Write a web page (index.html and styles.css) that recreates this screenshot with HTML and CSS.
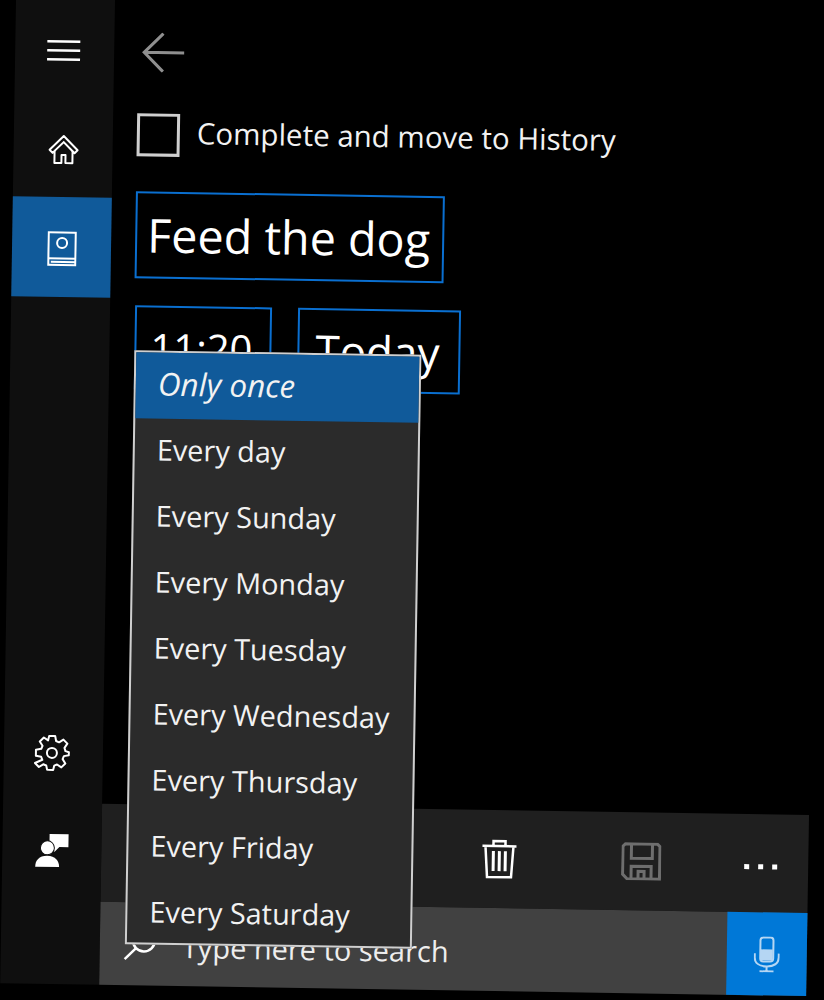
FILE: index.html
```html
<!DOCTYPE html>
<html lang="en">
<head>
<meta charset="utf-8">
<title>Reminder</title>
<link rel="stylesheet" href="styles.css">
</head>
<body>
<div class="app">
  <nav class="sidebar">
    <div class="nav-item nav-menu">
      <svg width="36" height="24" viewBox="0 0 36 24"><path d="M2 3.500H35M2 12.500H35M2 21.500H35" stroke="#fff" stroke-width="2.500" fill="none"/></svg>
    </div>
    <div class="nav-item">
      <svg width="32" height="32" viewBox="0 0 32 32" fill="none" stroke="#fff" stroke-width="2"><path d="M16 2 2 16l3 3 2-2v12h7v-8h4v8h7V17l2 2 3-3z" stroke-linejoin="round"/><path d="M7 17 16 8l9 9"/></svg>
    </div>
    <div class="nav-item nav-active">
      <svg width="30" height="36" viewBox="0 0 30 36" fill="none" stroke="#fff" stroke-width="2"><path d="M1.500 1.500H28.500V34H1.500Z"/><path d="M1.500 27.500H28.500M4 31H28.500"/><circle cx="15" cy="12" r="5"/></svg>
    </div>
    <div class="nav-spacer"></div>
    <div class="nav-item nav-gear">
      <svg width="36" height="36" viewBox="0 0 36 36" fill="none" stroke="#fff" stroke-width="2"><path d="M15 2h6l1 5 3 1.300 4.300-2.800 4 4-2.800 4.300L31.500 17l3.500 1v3l-5 1-1.200 3 2.800 4.300-4 4-4.300-2.800-2.800 1.200-1 4.300h-6l-1-4.300-3-1.200-4.300 2.800-4-4L8.500 26 7.300 23 2 22v-6l5.300-1 1.200-3L5.700 7.700l4-4L14 6.500z" transform="translate(0 -1)" stroke-linejoin="round"/><circle cx="18" cy="18" r="5"/></svg>
    </div>
    <div class="nav-item nav-person">
      <svg width="34" height="36" viewBox="0 0 34 36" fill="#fff"><path d="M14 1h19v13H24l-5 5-1-7-4-3z"/><circle cx="12" cy="15" r="7" stroke="#0f0f0f" stroke-width="1"/><path d="M0 34c0-6 4-11 12-11s12 5 12 11z"/></svg>
    </div>
  </nav>
  <main class="main">
    <section class="content">
      <div class="back">
        <svg width="44" height="40" viewBox="0 0 44 40" fill="none" stroke="#8f8f8f" stroke-width="3"><path d="M43 20H3M22 1 3 20l19 19"/></svg>
      </div>
      <div class="complete">
        <span class="checkbox"></span>
        <span class="complete-label">Complete and move to History</span>
      </div>
      <div class="field field-title">Feed the dog</div>
      <div class="field-row">
        <div class="field field-time">11:20</div>
        <div class="field field-date">Today</div>
      </div>
    </section>
    <div class="toolbar">
      <div class="tool tool-trash">
        <svg width="36" height="42" viewBox="0 0 36 42" fill="none" stroke="#fff" stroke-width="2.500"><path d="M1 8H35M4 8 6 39H30L32 8M12 8V3H24V8"/><path d="M12 13V33M18 13V33M24 13V33" stroke-width="3"/></svg>
      </div>
      <div class="tool tool-save">
        <svg width="40" height="38" viewBox="0 0 40 38" fill="none" stroke="#6e6e6e" stroke-width="3"><path d="M4 1.500H36L38.500 4V36.500H6L1.500 32V4Z"/><path d="M10 2V16H31V2M10 36V24H30V36M17 36V29H23V36"/></svg>
      </div>
      <div class="tool tool-more">
        <span class="dot"></span><span class="dot"></span><span class="dot"></span>
      </div>
    </div>
    <div class="searchbar">
      <svg class="search-icon" width="34" height="34" viewBox="0 0 34 34" fill="none" stroke="#fff" stroke-width="2.500"><circle cx="21" cy="13" r="11"/><path d="M13 21 2 32"/></svg>
      <span class="search-text">Type here to search</span>
      <div class="mic">
        <svg width="26" height="36" viewBox="0 0 26 36" fill="none" stroke="#b5d6f3" stroke-width="2"><rect x="6.500" y="1" width="13" height="24" rx="3"/><path d="M7 13H19V24H7Z" fill="#b5d6f3" stroke="none"/><path d="M1 17V21C1 27 6 30 13 30S25 27 25 21V17M13 30V35M6 35H20"/></svg>
      </div>
    </div>
  </main>
  <ul class="menu">
    <li class="menu-item menu-selected">Only once</li>
    <li class="menu-item">Every day</li>
    <li class="menu-item">Every Sunday</li>
    <li class="menu-item">Every Monday</li>
    <li class="menu-item">Every Tuesday</li>
    <li class="menu-item">Every Wednesday</li>
    <li class="menu-item">Every Thursday</li>
    <li class="menu-item">Every Friday</li>
    <li class="menu-item menu-last">Every Saturday</li>
  </ul>
</div>
</body>
</html>
```
FILE: styles.css
```css
html, body {
  margin: 0;
  padding: 0;
  height: 100%;
  background: #000;
  overflow: hidden;
}

body {
  font-family: "Open Sans", "Noto Sans", sans-serif;
  color: #fff;
}

.app {
  position: relative;
  width: 806px;
  height: 987px;
  margin: -4px 0 0 16px;
  display: grid;
  grid-template-columns: 99px 1fr;
  transform: rotate(0.92deg);
  transform-origin: -16px 4px;
}

.sidebar {
  background: #0f0f0f;
  display: flex;
  flex-direction: column;
  padding-top: 3px;
}

.nav-item {
  height: 100px;
  flex: none;
  display: flex;
  align-items: center;
  justify-content: center;
}

.nav-menu {
  padding-right: 3px;
  box-sizing: border-box;
}

.nav-active {
  background: #105a9a;
  margin-top: -3px;
  padding-top: 4px;
  height: 96px;
}

.nav-spacer {
  flex: 1;
}

.nav-gear {
  height: 98px;
  margin-left: -4px;
}

.nav-person {
  height: 98px;
  margin-bottom: 84px;
}

.main {
  display: flex;
  flex-direction: column;
}

.content {
  flex: 1;
  padding: 34px 0 0 24px;
}

.back {
  height: 40px;
  margin-bottom: 41px;
  padding-left: 3px;
}

.complete {
  display: flex;
  align-items: center;
  gap: 17px;
  height: 42px;
  margin-bottom: 36px;
}

.checkbox {
  width: 37px;
  height: 37px;
  border: 3px solid #cfcfcf;
  flex: none;
}

.complete-label {
  font-size: 29.500px;
  color: #f2f2f2;
  padding-bottom: 5px;
}

.field {
  box-sizing: border-box;
  border: 2px solid #0a6fd0;
  padding-left: 10px;
  display: flex;
  align-items: center;
  line-height: 1;
}

.field-title {
  width: 309px;
  height: 87px;
  font-size: 46.700px;
  margin-bottom: 27px;
}

.field-row {
  display: flex;
  gap: 26px;
}

.field-time {
  width: 137px;
  height: 84px;
  font-size: 40px;
  padding-left: 14px;
  margin-left: 1px;
}

.field-date {
  width: 163px;
  height: 84px;
  font-size: 44px;
  padding-left: 16px;
}

.toolbar {
  height: 98px;
  background: #1f1f1f;
  display: flex;
  justify-content: flex-end;
}

.tool {
  display: flex;
  align-items: center;
  justify-content: center;
  width: 142px;
}

.tool-more {
  width: 96px;
  gap: 9px;
  padding-top: 6px;
  box-sizing: border-box;
}

.dot {
  width: 5px;
  height: 5px;
  background: #fff;
}

.searchbar {
  position: relative;
  height: 83px;
  background: #414141;
  display: flex;
  align-items: center;
  padding-left: 23px;
}

.search-icon {
  flex: none;
  margin-top: 1px;
}

.search-text {
  flex: 1;
  margin-left: 25px;
  font-size: 29px;
  color: #eee;
  padding-top: 3px;
}

.mic {
  width: 80px;
  height: 83px;
  background: #0078d7;
  display: flex;
  align-items: center;
  justify-content: center;
}

.menu {
  position: absolute;
  left: 124px;
  top: 352px;
  width: 287px;
  margin: 0;
  padding: 0;
  list-style: none;
  background: #2b2b2b;
  box-sizing: border-box;
  border: 2px solid #cfcfcf;
}

.menu-item {
  box-sizing: border-box;
  height: 66px;
  padding-bottom: 6px;
  display: flex;
  align-items: center;
  padding-left: 22px;
  font-size: 28.900px;
  color: #f2f2f2;
}

.menu-last {
  height: 62px;
  padding-bottom: 2px;
}

.menu-selected {
  background: #105a9a;
  font-style: italic;
  font-size: 31.500px;
}
```
